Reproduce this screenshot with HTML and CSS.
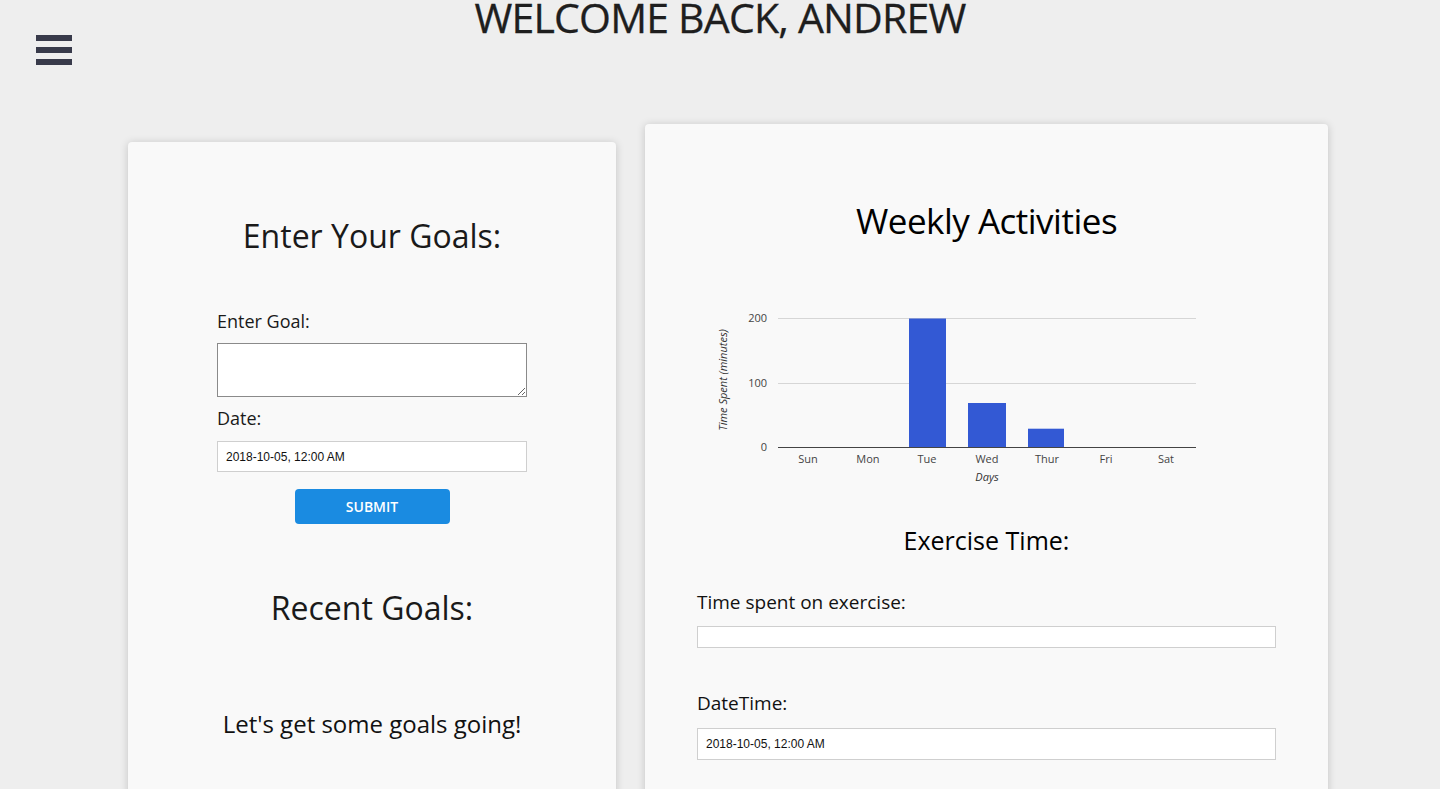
FILE: index.html
```html
<!DOCTYPE html>
<html lang="en">
<head>
<meta charset="utf-8">
<title>Dashboard</title>
<link rel="stylesheet" href="styles.css">
</head>
<body>
<header class="top">
  <button class="menu-toggle" aria-label="Menu">
    <span class="bar"></span><span class="bar"></span><span class="bar"></span>
  </button>
  <h1 class="welcome">WELCOME BACK, ANDREW</h1>
</header>
<main class="cards">
  <section class="card card-goals">
    <h2 class="card-title">Enter Your Goals:</h2>
    <form class="goal-form">
      <label class="field-label">Enter Goal:</label>
      <textarea class="goal-text"></textarea>
      <label class="field-label date-label">Date:</label>
      <input class="date-input" type="text" value="2018-10-05, 12:00 AM">
      <button type="button" class="submit-btn">SUBMIT</button>
    </form>
    <h2 class="card-title recent-title">Recent Goals:</h2>
    <p class="empty-msg">Let's get some goals going!</p>
  </section>
  <section class="card card-activity">
    <h2 class="card-title activity-title">Weekly Activities</h2>
    <svg class="chart" width="579" height="200" viewBox="0 0 579 200">
      <g class="grid">
        <line x1="81" y1="28.5" x2="499" y2="28.5"/>
        <line x1="81" y1="93.5" x2="499" y2="93.5"/>
      </g>
      <g class="bars">
        <rect x="212" y="28.5" width="37" height="129"/>
        <rect x="271" y="113" width="38" height="44.5"/>
        <rect x="331" y="138.7" width="36" height="18.8"/>
      </g>
      <line class="baseline" x1="81" y1="157.5" x2="499" y2="157.5"/>
      <g class="ylabels">
        <text x="70" y="32">200</text>
        <text x="70" y="97">100</text>
        <text x="70" y="161">0</text>
      </g>
      <g class="xlabels">
        <text x="111" y="173">Sun</text>
        <text x="171" y="173">Mon</text>
        <text x="230" y="173">Tue</text>
        <text x="290" y="173">Wed</text>
        <text x="350" y="173">Thur</text>
        <text x="409" y="173">Fri</text>
        <text x="469" y="173">Sat</text>
      </g>
      <text class="axis-title" x="290" y="191">Days</text>
      <text class="axis-title" x="30" y="90" transform="rotate(-90 30 90)">Time Spent (minutes)</text>
    </svg>
    <h3 class="sub-title">Exercise Time:</h3>
    <form class="exercise-form">
      <label class="field-label">Time spent on exercise:</label>
      <input class="minutes-input" type="text">
      <label class="field-label datetime-label">DateTime:</label>
      <input class="date-input wide" type="text" value="2018-10-05, 12:00 AM">
    </form>
  </section>
</main>
</body>
</html>
```
FILE: styles.css
```css
* { box-sizing: border-box; }
html, body { margin: 0; padding: 0; }
body {
  background: #eeeeee;
  font-family: "Open Sans", "Noto Sans", sans-serif;
  color: #1a1a1a;
  overflow: hidden;
  height: 789px;
}
.top {
  position: relative;
  height: 34px;
}
.menu-toggle {
  position: absolute;
  left: 36px;
  top: 35px;
  width: 36px;
  padding: 0;
  border: 0;
  background: none;
  display: flex;
  flex-direction: column;
  gap: 6px;
}
.menu-toggle .bar {
  display: block;
  height: 6px;
  width: 36px;
  background: #383a4a;
}
.welcome {
  margin: 0;
  text-align: center;
  font-size: 41px;
  font-weight: 400;
  line-height: 34px;
  color: #1e1e1e;
  letter-spacing: -0.8px;
  -webkit-text-stroke: 0.3px #1e1e1e;
}
.cards {
  display: flex;
  align-items: flex-start;
  gap: 29px;
  padding-left: 128px;
  margin-top: 90px;
}
.card {
  background: #f9f9f9;
  border-radius: 4px;
  box-shadow: 0 1px 8px rgba(0, 0, 0, 0.18);
  display: flex;
  flex-direction: column;
  align-items: center;
}
.card-goals {
  width: 488px;
  height: 700px;
  margin-top: 18px;
  padding-top: 72px;
}
.card-activity {
  width: 683px;
  height: 720px;
  padding-top: 73px;
}
.card-title {
  margin: 0;
  font-size: 32px;
  line-height: 44px;
  font-weight: 400;
  color: #1a1a1a;
}
.activity-title {
  font-size: 35px;
  line-height: 48px;
  color: #000;
  letter-spacing: -0.5px;
}
.goal-form {
  width: 310px;
  display: flex;
  flex-direction: column;
  margin-top: 51px;
}
.field-label {
  font-size: 18px;
  line-height: 24px;
  color: #1a1a1a;
}
.goal-text {
  margin-top: 10px;
  height: 54px;
  width: 310px;
  border: 1px solid #8a8a8a;
  background: #fff;
  resize: vertical;
}
.date-label { margin-top: 9px; }
.date-input {
  margin-top: 11px;
  height: 31px;
  width: 310px;
  border: 1px solid #cfcfcf;
  background: #fff;
  padding: 0 8px;
  font-family: "Liberation Sans", Arial, sans-serif;
  font-size: 12px;
  color: #111;
}
.submit-btn {
  align-self: center;
  margin-top: 17px;
  width: 155px;
  height: 35px;
  border: 0;
  border-radius: 4px;
  background: #1a8be1;
  color: #fff;
  font-family: "Open Sans", sans-serif;
  font-size: 14px;
  font-weight: 600;
}
.recent-title { margin-top: 62px; }
.empty-msg {
  margin: 78px 0 0;
  font-size: 24px;
  line-height: 32px;
  color: #111;
}
.chart {
  display: block;
  margin-top: 45px;
  font-family: "Open Sans", sans-serif;
}
.chart .grid line { stroke: #d6d6d6; stroke-width: 1; }
.chart .baseline { stroke: #444; stroke-width: 1.2; }
.chart .bars rect { fill: #3359d4; }
.chart .ylabels text { font-size: 11px; fill: #444; text-anchor: end; }
.chart .xlabels text { font-size: 11px; fill: #444; text-anchor: middle; }
.chart .axis-title { font-size: 11px; fill: #333; font-style: italic; text-anchor: middle; }
.sub-title {
  margin: 34px 0 0;
  font-size: 25px;
  line-height: 32px;
  font-weight: 400;
  color: #000;
}
.exercise-form {
  width: 579px;
  display: flex;
  flex-direction: column;
  margin-top: 34px;
}
.exercise-form .field-label { font-size: 19px; color: #111; }
.minutes-input {
  margin-top: 12px;
  height: 22px;
  width: 579px;
  border: 1px solid #cfcfcf;
  background: #fff;
}
.datetime-label { margin-top: 43px; }
.date-input.wide {
  width: 579px;
  height: 32px;
  margin-top: 13px;
}
```
